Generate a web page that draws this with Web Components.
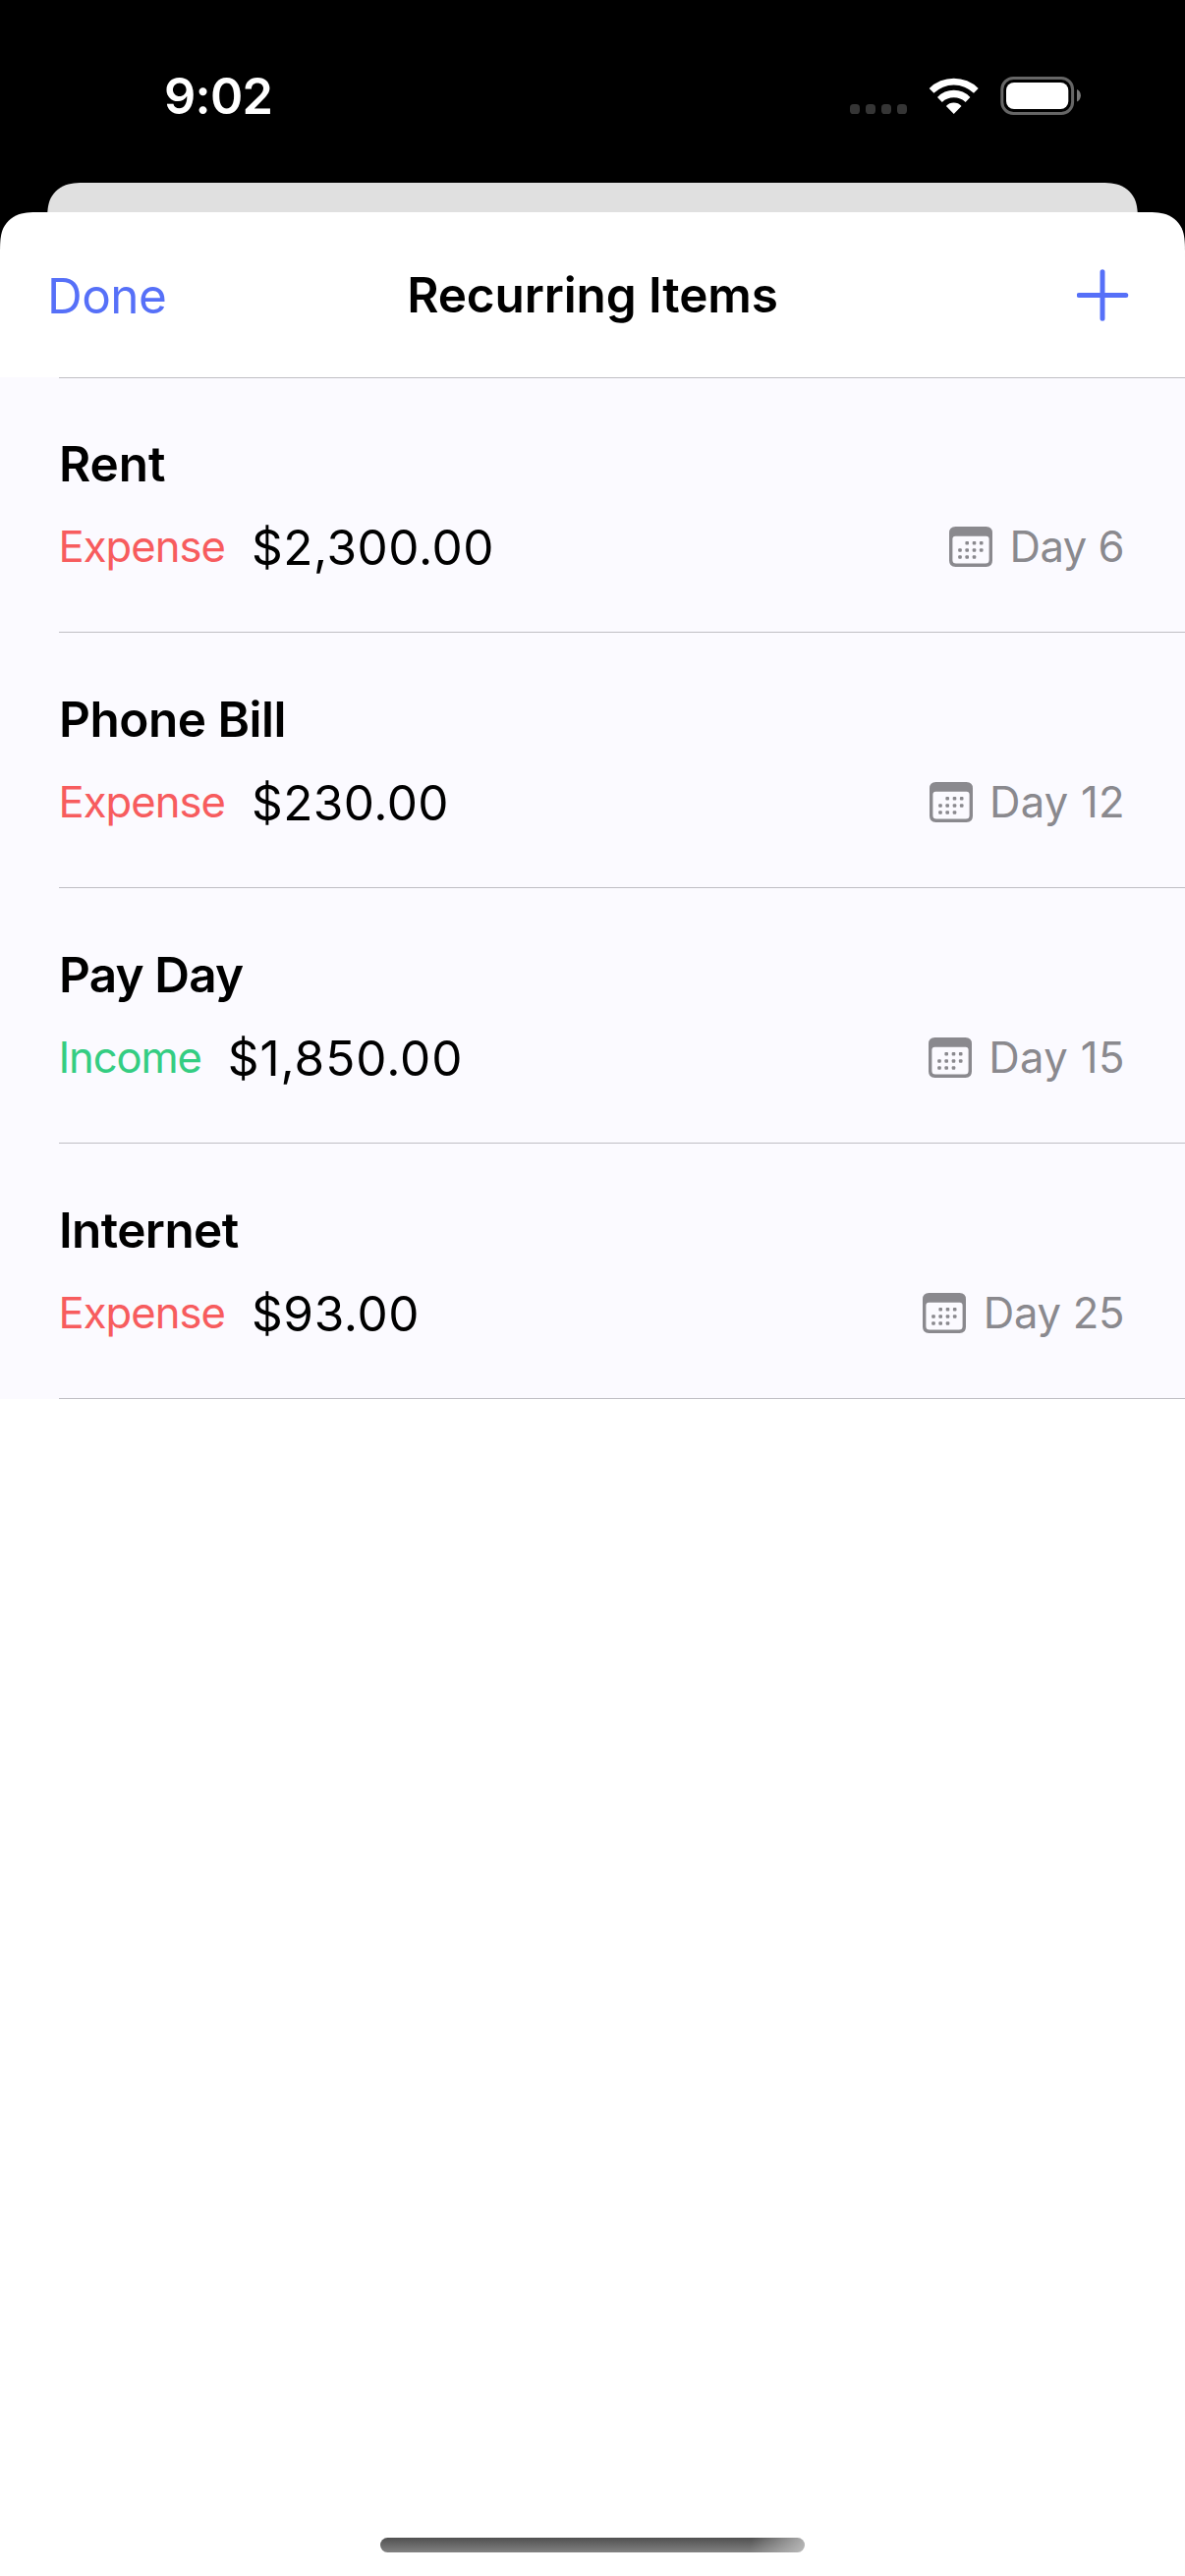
<!DOCTYPE html>
<html lang="en">
<head>
<meta charset="utf-8">
<title>Recurring Items</title>
<style>
html,body{margin:0;height:100%;background:#000}
body{font-family:Inter,"Liberation Sans",sans-serif;color:#000}
</style>
</head>
<body>
<phone-screen>
  <status-bar slot="status" time="9:02"></status-bar>
  <nav-header>
    <span slot="left">Done</span>
    <span slot="title">Recurring Items</span>
  </nav-header>
  <item-list>
    <recurring-item name="Rent" kind="Expense" amount="$2,300.00" day="Day 6" track="-.1 .55 -.55"></recurring-item>
    <recurring-item name="Phone Bill" kind="Expense" amount="$230.00" day="Day 12" track="-.5 .45 .2"></recurring-item>
    <recurring-item name="Pay Day" kind="Income" amount="$1,850.00" day="Day 15" track="-.85 .95 .4"></recurring-item>
    <recurring-item name="Internet" kind="Expense" amount="$93.00" day="Day 25" track="-.6 .65 -.3"></recurring-item>
  </item-list>
  <home-indicator></home-indicator>
</phone-screen>
<script>
class Base extends HTMLElement{
  connectedCallback(){
    if(!this.shadowRoot) this.attachShadow({mode:'open'}).innerHTML=this.view();
  }
}
customElements.define('phone-screen',class extends Base{
  view(){return `<style>
    :host{display:flex;flex-direction:column;width:1206px;height:2622px;background:#000;overflow:hidden}
    .behind{height:30px;margin:0 48px;background:#e0e0e0;clip-path:path("M0 46C0 32.65 0 26.05 2.25 18.94C5.07 11.18 11.18 5.07 18.94 2.25C26.05 0 32.65 0 46 0H1064C1077.35 0 1083.95 0 1091.06 2.25C1098.82 5.07 1104.93 11.18 1107.75 18.94C1110 26.05 1110 32.65 1110 46Z")}
    .sheet{flex:1;display:flex;flex-direction:column;background:#fff;clip-path:path("M0 46C0 32.65 0 26.05 2.25 18.94C5.07 11.18 11.18 5.07 18.94 2.25C26.05 0 32.65 0 46 0H1160C1173.35 0 1179.95 0 1187.06 2.25C1194.82 5.07 1200.93 11.18 1203.75 18.94C1206 26.05 1206 32.65 1206 46V2406H0Z")}
  </style><slot name="status"></slot><div class="behind"></div><div class="sheet"><slot></slot></div>`}
});
customElements.define('status-bar',class extends Base{
  view(){return `<style>
    :host{display:flex;justify-content:space-between;align-items:flex-start;box-sizing:border-box;height:186px;padding:68px 105px 0 167px;color:#fff}
    .time{font-size:50.5px;font-weight:600;line-height:60px;letter-spacing:-.7px}
    .icons{display:flex;align-items:flex-start;padding-top:10px}
    svg{display:block}
    .dots{margin-top:28px}.wifi{margin:1px 0 0 22px}.battery{margin-left:21px}
  </style>
  <span class="time">${this.getAttribute('time')}</span>
  <div class="icons">
    <svg class="dots" width="58" height="10" fill="#353535"><rect width="10" height="10" rx="3.6"/><rect x="16" width="10" height="10" rx="3.6"/><rect x="32" width="10" height="10" rx="3.6"/><rect x="48" width="10" height="10" rx="3.6"/></svg>
    <svg class="wifi" width="52" height="38" fill="#fff"><path d="M.7 11A35.4 35.4 0 0 1 50.7 11L46 15.8A29 29 0 0 0 5.4 15.8Z"/><path d="M9 20A22.8 22.8 0 0 1 42.4 20L37.6 24.9A17.7 17.7 0 0 0 13.8 24.9Z"/><path d="M17.9 28.9A10.5 10.5 0 0 1 33.5 28.9L25.7 37Z"/></svg>
    <svg class="battery" width="83" height="39"><rect x="1.8" y="1.5" width="71.8" height="36" rx="11.5" fill="none" stroke="#666" stroke-width="3"/><rect x="6" y="6" width="63.3" height="27" rx="8" fill="#fff"/><path d="M78 13C83.2 15 83.2 23.5 78 25.5Z" fill="#777"/></svg>
  </div>`}
});
customElements.define('nav-header',class extends Base{
  view(){return `<style>
    :host{display:grid;grid-template-columns:1fr auto 1fr;align-items:center;height:168px;padding:0 57px 0 48px;font-size:49.5px;line-height:60px}
    .left{color:#5670f8;letter-spacing:-.55px;padding-top:2px}
    .title{font-weight:600;letter-spacing:-.12px;margin-left:9px}
    svg{justify-self:end;margin-top:1px;display:block}
  </style>
  <span class="left"><slot name="left"></slot></span>
  <span class="title"><slot name="title"></slot></span>
  <svg width="53" height="53" fill="none" stroke="#5670f8" stroke-width="5" stroke-linecap="round"><path d="M26 2.7V50.3M2.2 26.5H49.8"/></svg>`}
});
customElements.define('item-list',class extends Base{
  view(){return `<style>
    :host{display:block;background:#fbfaff}
    .top{height:1px;margin:0 0 -1px 60px;background:#bfbec4}
  </style><div class="top"></div><slot></slot>`}
});
customElements.define('calendar-icon',class extends Base{
  view(){
    const dots=[[18.2,16.7],[25.5,16.7],[32.7,16.7],[11,24],[18.2,24],[25.5,24],[32.7,24],[11,31],[18.2,31],[25.5,31]]
      .map(([x,y])=>`<rect x="${x-1.8}" y="${y-1.8}" width="3.6" height="3.6" rx="1"/>`).join('');
    return `<style>:host{display:block;width:44px;height:41px}svg{display:block}</style>
    <svg width="44" height="41" fill="#8a898e"><path fill-rule="evenodd" d="M6.5 0H37.5Q44 0 44 6.5V34.5Q44 41 37.5 41H6.5Q0 41 0 34.5V6.5Q0 0 6.5 0ZM6.3 9.8Q3.4 9.8 3.4 12.7V34Q3.4 37.6 7 37.6H37Q40.6 37.6 40.6 34V12.7Q40.6 9.8 37.7 9.8Z"/>${dots}</svg>`}
});
customElements.define('recurring-item',class extends Base{
  view(){
    const a=k=>this.getAttribute(k);
    const [n,m,d]=a('track').split(' ');
    const income=a('kind')==='Income';
    return `<style>
    :host{display:flex;flex-direction:column;box-sizing:border-box;height:260px;padding:58px 61.5px 0 60px;
      background:linear-gradient(#bfbec4,#bfbec4) 60px 259px/1146px 1px no-repeat;white-space:nowrap}
    .name{font-size:49.5px;line-height:60px;font-weight:600;letter-spacing:${n}px}
    .row{display:flex;align-items:center;margin-top:25px;height:60px}
    .kind,.day{font-size:43.6px;line-height:53px;padding-bottom:2px}
    .kind{color:${income?'#34cd82':'#f75c5e'};letter-spacing:${income?-1.15:-.98}px;margin:0 27px 0 -.5px}
    .amount{font-size:49.5px;line-height:60px;letter-spacing:${m}px}
    .day{color:#8a898e;letter-spacing:${d}px;margin:0 ${-d}px 0 17.5px}
    calendar-icon{margin:0 0 1px auto}
    </style>
    <div class="name">${a('name')}</div>
    <div class="row"><span class="kind">${a('kind')}</span><span class="amount">${a('amount')}</span><calendar-icon></calendar-icon><span class="day">${a('day')}</span></div>`}
});
customElements.define('home-indicator',class extends Base{
  view(){return `<style>
    :host{display:block;width:432px;height:15px;border-radius:7.5px;margin:auto auto 24px;
      background:linear-gradient(100deg,transparent 87%,rgba(200,200,200,.8) 100%),linear-gradient(#505050,#828282)}
  </style>`}
});
</script>
</body>
</html>
